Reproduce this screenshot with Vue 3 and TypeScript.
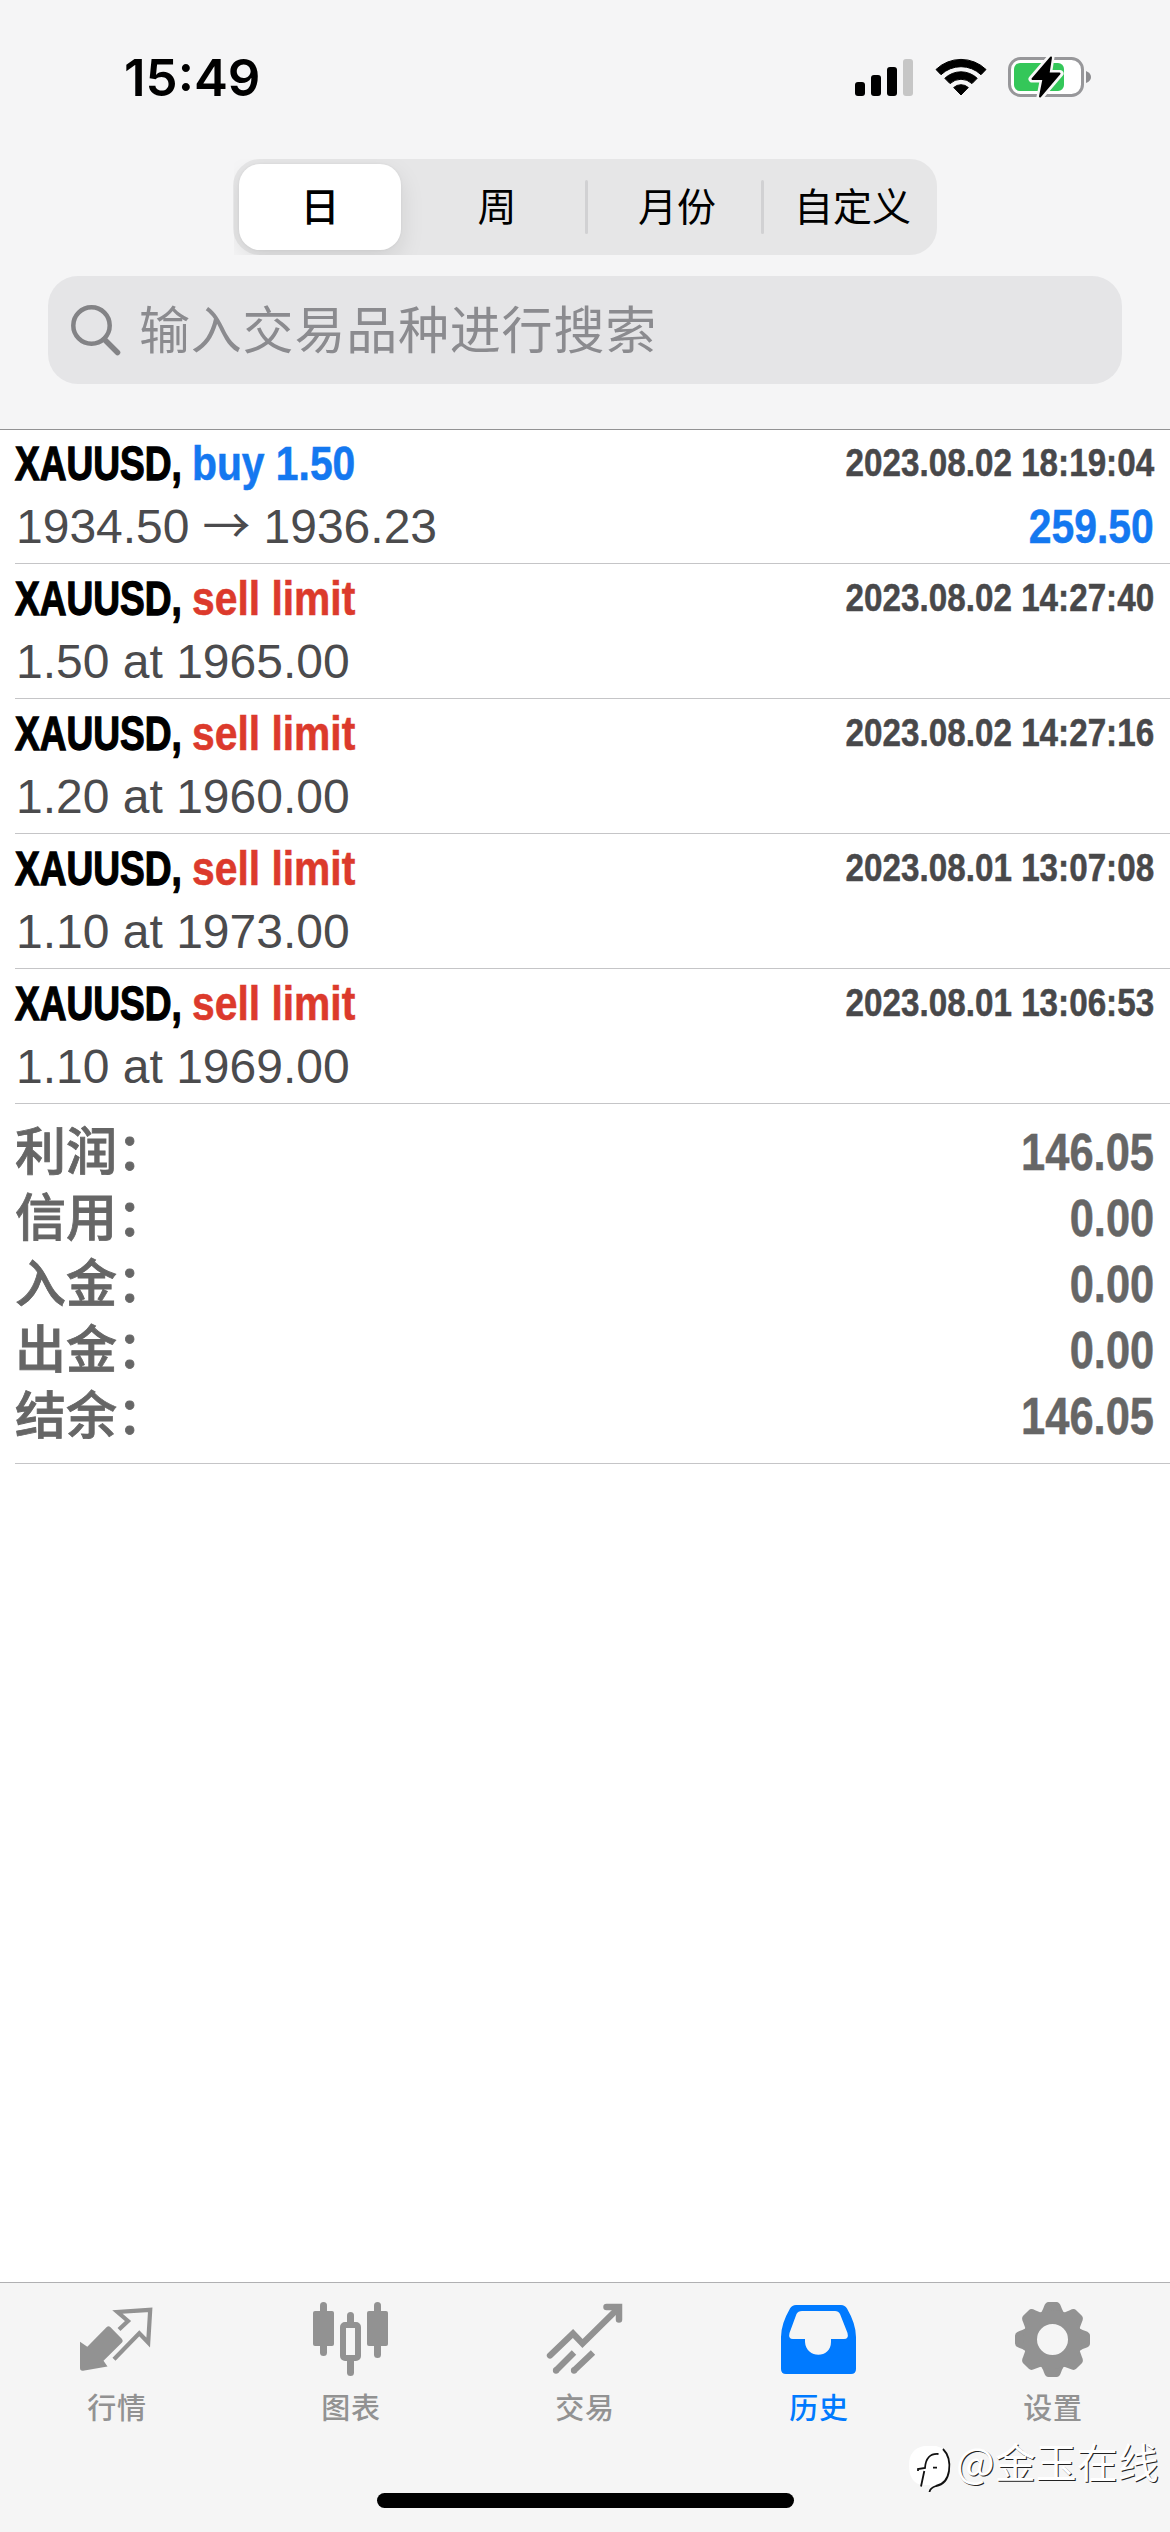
<script setup lang="ts">
interface Deal {
  action: string
  side: 'buy' | 'sell'
  from: string
  to?: string
  time: string
  profit?: string
}

const periods: string[] = ['日', '周', '月份', '自定义']

const deals: Deal[] = [
  { action: 'buy 1.50', side: 'buy', from: '1934.50', to: '1936.23', time: '2023.08.02 18:19:04', profit: '259.50' },
  { action: 'sell limit', side: 'sell', from: '1.50 at 1965.00', time: '2023.08.02 14:27:40' },
  { action: 'sell limit', side: 'sell', from: '1.20 at 1960.00', time: '2023.08.02 14:27:16' },
  { action: 'sell limit', side: 'sell', from: '1.10 at 1973.00', time: '2023.08.01 13:07:08' },
  { action: 'sell limit', side: 'sell', from: '1.10 at 1969.00', time: '2023.08.01 13:06:53' },
]

const totals: { label: string; value: string }[] = [
  { label: '利润：', value: '146.05' },
  { label: '信用：', value: '0.00' },
  { label: '入金：', value: '0.00' },
  { label: '出金：', value: '0.00' },
  { label: '结余：', value: '146.05' },
]

const teeth: number[] = [0, 45, 90, 135, 180, 225, 270, 315]
</script>

<template>
  <div class="screen">
    <header class="top">
      <div class="status">
        <span class="clock">15:49</span>
        <div class="indicators">
          <svg class="signal" width="58" height="38" viewBox="0 0 58 38">
            <rect x="0" y="24" width="10" height="14" rx="3" />
            <rect x="16" y="17" width="10" height="21" rx="3" />
            <rect x="32" y="9" width="10" height="29" rx="3" />
            <rect x="48" y="1" width="10" height="37" rx="3" fill="#c6c6c6" />
          </svg>
          <svg class="wifi" width="52" height="38" viewBox="0 0 52 38">
            <path d="M1 11.500A36 36 0 0 1 51 11.500L46 16.700A29 29 0 0 0 6 16.700Z" stroke="#000" stroke-width="1" stroke-linejoin="round" />
            <path d="M9.800 20.300A23.500 23.500 0 0 1 42.200 20.300L37 25.600A16 16 0 0 0 15 25.600Z" stroke="#000" stroke-width="1" stroke-linejoin="round" />
            <path d="M18.700 29.500A11 11 0 0 1 33.300 29.500L26 37Z" stroke="#000" stroke-width="1" stroke-linejoin="round" />
          </svg>
          <svg class="battery" width="84" height="44" viewBox="0 0 84 44">
            <rect x="1.500" y="3.500" width="73" height="37" rx="11" fill="#fff" stroke="#97979a" stroke-width="3" />
            <path d="M78 16Q83 18 83 22Q83 26 78 28Z" fill="#8c8c8f" />
            <rect x="6" y="8" width="50" height="28" rx="6" fill="#34c759" />
            <path d="M43 2L24 24H35.500L32 42L52 18.500H40.500Z" stroke="#f8f8f8" stroke-width="7" stroke-linejoin="round" />
            <path d="M43 2.500L24.500 24H35.500L32 41.500L51.500 18.500H40.500Z" stroke="#000" stroke-width="2" stroke-linejoin="round" />
          </svg>
        </div>
      </div>

      <nav class="periods">
        <span v-for="(period, i) in periods" :key="period" class="period" :class="{ selected: i === 0, ruled: i > 1 }">{{ period }}</span>
      </nav>

      <div class="search">
        <svg width="52" height="52" viewBox="0 0 52 52" fill="none" stroke="#838386" stroke-linecap="round">
          <circle cx="21.500" cy="21.500" r="18.200" stroke-width="4.500" />
          <path d="M34.500 35.500L47.500 48.500" stroke-width="5.500" />
        </svg>
        <span class="placeholder">输入交易品种进行搜索</span>
      </div>
    </header>

    <main class="history">
      <article v-for="deal in deals" :key="deal.time" class="deal">
        <div class="line">
          <div class="title">
            <b class="symbol">XAUUSD,</b>
            <b class="action" :class="deal.side">{{ deal.action }}</b>
          </div>
          <b class="time">{{ deal.time }}</b>
        </div>
        <div class="line">
          <span v-if="deal.to" class="price">{{ deal.from }}<span class="arrow">→</span>{{ deal.to }}</span>
          <span v-else class="price">{{ deal.from }}</span>
          <b v-if="deal.profit" class="profit">{{ deal.profit }}</b>
        </div>
      </article>

      <section class="totals">
        <div v-for="row in totals" :key="row.label" class="total">
          <span class="label">{{ row.label }}</span>
          <b class="value">{{ row.value }}</b>
        </div>
      </section>
    </main>

    <footer class="bottom">
      <div class="tabs">
        <div class="tab">
          <svg width="84" height="84" viewBox="0 0 84 84">
            <path d="M5 39.700L12.300 44.700L32 24.800Q33.500 23.500 35 24.800L47 37Q48.500 39 47 40.500L28.500 58.700L32.500 64.500L8 68.700Q5 69 5 66Z" />
            <path d="M44 27.500L53 19L42.500 10L75.200 7.800L73.200 40.500L64.300 31.300L39 57.300" fill="none" stroke="currentColor" stroke-width="4.200" />
          </svg>
          <span>行情</span>
        </div>
        <div class="tab">
          <svg width="84" height="84" viewBox="0 0 84 84">
            <rect x="4" y="9" width="21" height="35" rx="2" />
            <rect x="11" y="0" width="7" height="54" rx="3.500" />
            <rect x="58" y="9" width="21" height="35" rx="2" />
            <rect x="65" y="0" width="7" height="56" rx="3.500" />
            <rect x="38" y="10" width="7" height="18" rx="3.500" />
            <rect x="38" y="50" width="7" height="24" rx="3.500" />
            <rect x="34" y="23" width="15" height="33" rx="2" fill="#f5f5f5" stroke="currentColor" stroke-width="6" />
          </svg>
          <span>图表</span>
        </div>
        <div class="tab">
          <svg width="84" height="84" viewBox="0 0 84 84" fill="none" stroke="currentColor" stroke-width="6.300">
            <path d="M7 53.500L30 31.500L39.500 41.500L75.500 6" stroke-linecap="round" />
            <path d="M63.500 5H76V17.500" stroke-width="6.500" stroke-linecap="round" />
            <path d="M31 50.500L13 68.500M50 50.500L31 68.500" />
            <path d="M13 68.500h.01M31 68.500h.01" stroke-linecap="round" />
          </svg>
          <span>交易</span>
        </div>
        <div class="tab active">
          <svg width="84" height="84" viewBox="0 0 84 84">
            <path fill-rule="evenodd" d="M19 3H64Q68 3 70 6.500Q79 22 79 35V67Q79 72 74 72H9Q4 72 4 67V35Q4 22 13 6.500Q15 3 19 3ZM25 9Q21 9 19.500 12L12.500 31Q11 37 16 37H28V40C29 57 54 57 54 40V37H67Q72 37 70.500 31L63 12Q61.500 9 58 9Z" />
          </svg>
          <span>历史</span>
        </div>
        <div class="tab">
          <svg width="84" height="84" viewBox="0 0 84 84">
            <g transform="translate(41.500,37.500)">
              <path
                v-for="angle in teeth"
                :key="angle"
                :transform="`rotate(${angle})`"
                d="M-14 -24Q-10.500 -27 -8.500 -33Q-7 -37.500 -4 -37.500H4Q7 -37.500 8.500 -33Q10.500 -27 14 -24V-18H-14Z"
              />
              <circle r="22.500" fill="none" stroke="currentColor" stroke-width="14" />
            </g>
          </svg>
          <span>设置</span>
        </div>
      </div>
      <div class="home"></div>
      <div class="mark">
        <svg width="44" height="50" viewBox="0 0 44 50">
          <path d="M15 9H27Q40 12 40 28Q40 46 21 52V48H13Q0 46 0 28Q0 12 15 9Z" fill="#fff" />
          <path d="M34 12Q42 20 40 34Q38 47 27 49Q21 51 20.500 55" fill="none" stroke="#111" stroke-width="1.800" />
          <path d="M29.500 17Q17 16 16 31L9 32V34M15.300 34L12 49.500M24 30.700H28" fill="none" stroke="#111" stroke-width="1.800" />
        </svg>
        <span>@金玉在线</span>
      </div>
    </footer>
  </div>
</template>

<style>
body {
  margin: 0;
  background: #fff;
}
</style>

<style scoped>
.screen {
  width: 1170px;
  height: 2532px;
  display: flex;
  flex-direction: column;
  overflow: hidden;
  background: #fff;
  font-family: 'Liberation Sans', 'Noto Sans CJK SC', sans-serif;
}

.top {
  box-sizing: border-box;
  height: 430px;
  flex: none;
  background: #f5f5f6;
  border-bottom: 1px solid #929294;
}

.status {
  display: flex;
  justify-content: space-between;
  height: 159px;
  padding: 0 78px 0 124px;
}

.clock {
  margin-top: 48px;
  height: 60px;
  font: 600 51px/60px Inter, sans-serif;
}

.indicators {
  display: flex;
  align-items: flex-start;
  padding-top: 55px;
}

.signal {
  margin: 3px 22px 0 0;
}

.wifi {
  margin: 3px 21px 0 0;
}

.periods {
  display: grid;
  grid-template-columns: 162px 192px 168px 1fr;
  box-sizing: border-box;
  width: 704px;
  height: 96px;
  margin: 0 auto;
  padding: 5px 0 5px 6px;
  border-radius: 27px;
  background: #e6e6e7;
}

.period {
  position: relative;
  text-align: center;
  border-radius: 21px;
  color: #000;
  font: 400 39px/81px 'Noto Sans CJK SC', sans-serif;
}

.selected {
  background: #fff;
  font-weight: 500;
  box-shadow: 0 9px 24px rgba(0, 0, 0, 0.1), 0 0 3px rgba(0, 0, 0, 0.06);
  clip-path: inset(-5px -40px -5px -5px);
}

.ruled::before {
  content: '';
  position: absolute;
  left: -8px;
  top: 16px;
  width: 3px;
  height: 54px;
  border-radius: 2px;
  background: #d1d1d3;
}

.period:last-child {
  padding-left: 7px;
}

.period:last-child::before {
  left: 0;
}

.search {
  display: flex;
  align-items: center;
  box-sizing: border-box;
  height: 108px;
  margin: 21px 48px 0;
  padding-left: 22px;
  border-radius: 30px;
  background: #e5e5e7;
}

.placeholder {
  margin-left: 17px;
  color: #8b8b8f;
  font: 400 51px/103px 'Noto Sans CJK SC', sans-serif;
  height: 108px;
  letter-spacing: 0.8px;
}

.history {
  flex: 1;
}

.deal {
  box-sizing: border-box;
  height: 135px;
  margin-left: 15px;
  padding: 3px 16px 0 0;
  border-bottom: 1px solid #c5c5c7;
}

.deal:first-child {
  height: 134px;
  padding-top: 2px;
}

.line {
  display: flex;
  justify-content: space-between;
  height: 63px;
  line-height: 63px;
  white-space: nowrap;
}

.title {
  display: flex;
  font-size: 48px;
}

/* Condensed faces: each run is narrowed about the edge it is aligned to */
.symbol,
.action {
  display: block;
  transform-origin: left center;
}

.symbol {
  width: 177px;
  transform: scaleX(0.772);
  -webkit-text-stroke: 1.3px currentColor;
}

.action {
  width: 164px;
  transform: scaleX(0.85);
  -webkit-text-stroke: 0.6px currentColor;
}

.buy {
  color: #1478f0;
}

.sell {
  color: #dc3a2c;
}

.time,
.profit,
.value {
  transform: scaleX(0.852);
  transform-origin: right center;
  -webkit-text-stroke: 0.5px currentColor;
}

.time {
  font-size: 39px;
  line-height: 61px;
  color: #48484a;
}

.price {
  padding-left: 1px;
  font-size: 48px;
  color: #4b4b4d;
}

.arrow {
  margin: 0 13px;
  font-family: 'Noto Sans CJK SC', sans-serif;
  line-height: 0;
}

.profit {
  font-size: 48px;
  color: #1478f0;
}

.totals {
  box-sizing: border-box;
  height: 360px;
  margin-left: 15px;
  padding: 16px 16px 0 0;
  border-bottom: 1px solid #c5c5c7;
}

.total {
  display: flex;
  justify-content: space-between;
  height: 66px;
  color: #666;
  font-size: 51px;
  line-height: 66px;
}

.label {
  font-weight: 500;
  -webkit-text-stroke: 0.8px currentColor;
}

.bottom {
  position: relative;
  box-sizing: border-box;
  height: 250px;
  flex: none;
  border-top: 1px solid #b0b0b2;
  background: #f5f5f5;
}

.tabs {
  display: flex;
}

.tab {
  flex: 1;
  display: flex;
  flex-direction: column;
  align-items: center;
  padding-top: 19px;
  color: #929292;
}

.tab svg {
  fill: currentColor;
}

.tab svg[fill='none'] {
  fill: none;
}

.tab span {
  margin-top: -2px;
  font: 500 29px/44px 'Noto Sans CJK SC', sans-serif;
  letter-spacing: 0.8px;
}

.active {
  color: #007aff;
}

.home {
  width: 417px;
  height: 15px;
  margin: 65px auto 0;
  border-radius: 8px;
  background: #000;
}

.mark {
  position: absolute;
  left: 909px;
  top: 154px;
  display: flex;
  align-items: center;
  color: #fff;
  white-space: nowrap;
}

.mark svg {
  overflow: visible;
}

.mark span {
  margin: -5px 0 0 3px;
  font: 400 41px/48px 'Noto Sans CJK SC', sans-serif;
  text-shadow: 1px 1px 0 #222;
}
</style>
